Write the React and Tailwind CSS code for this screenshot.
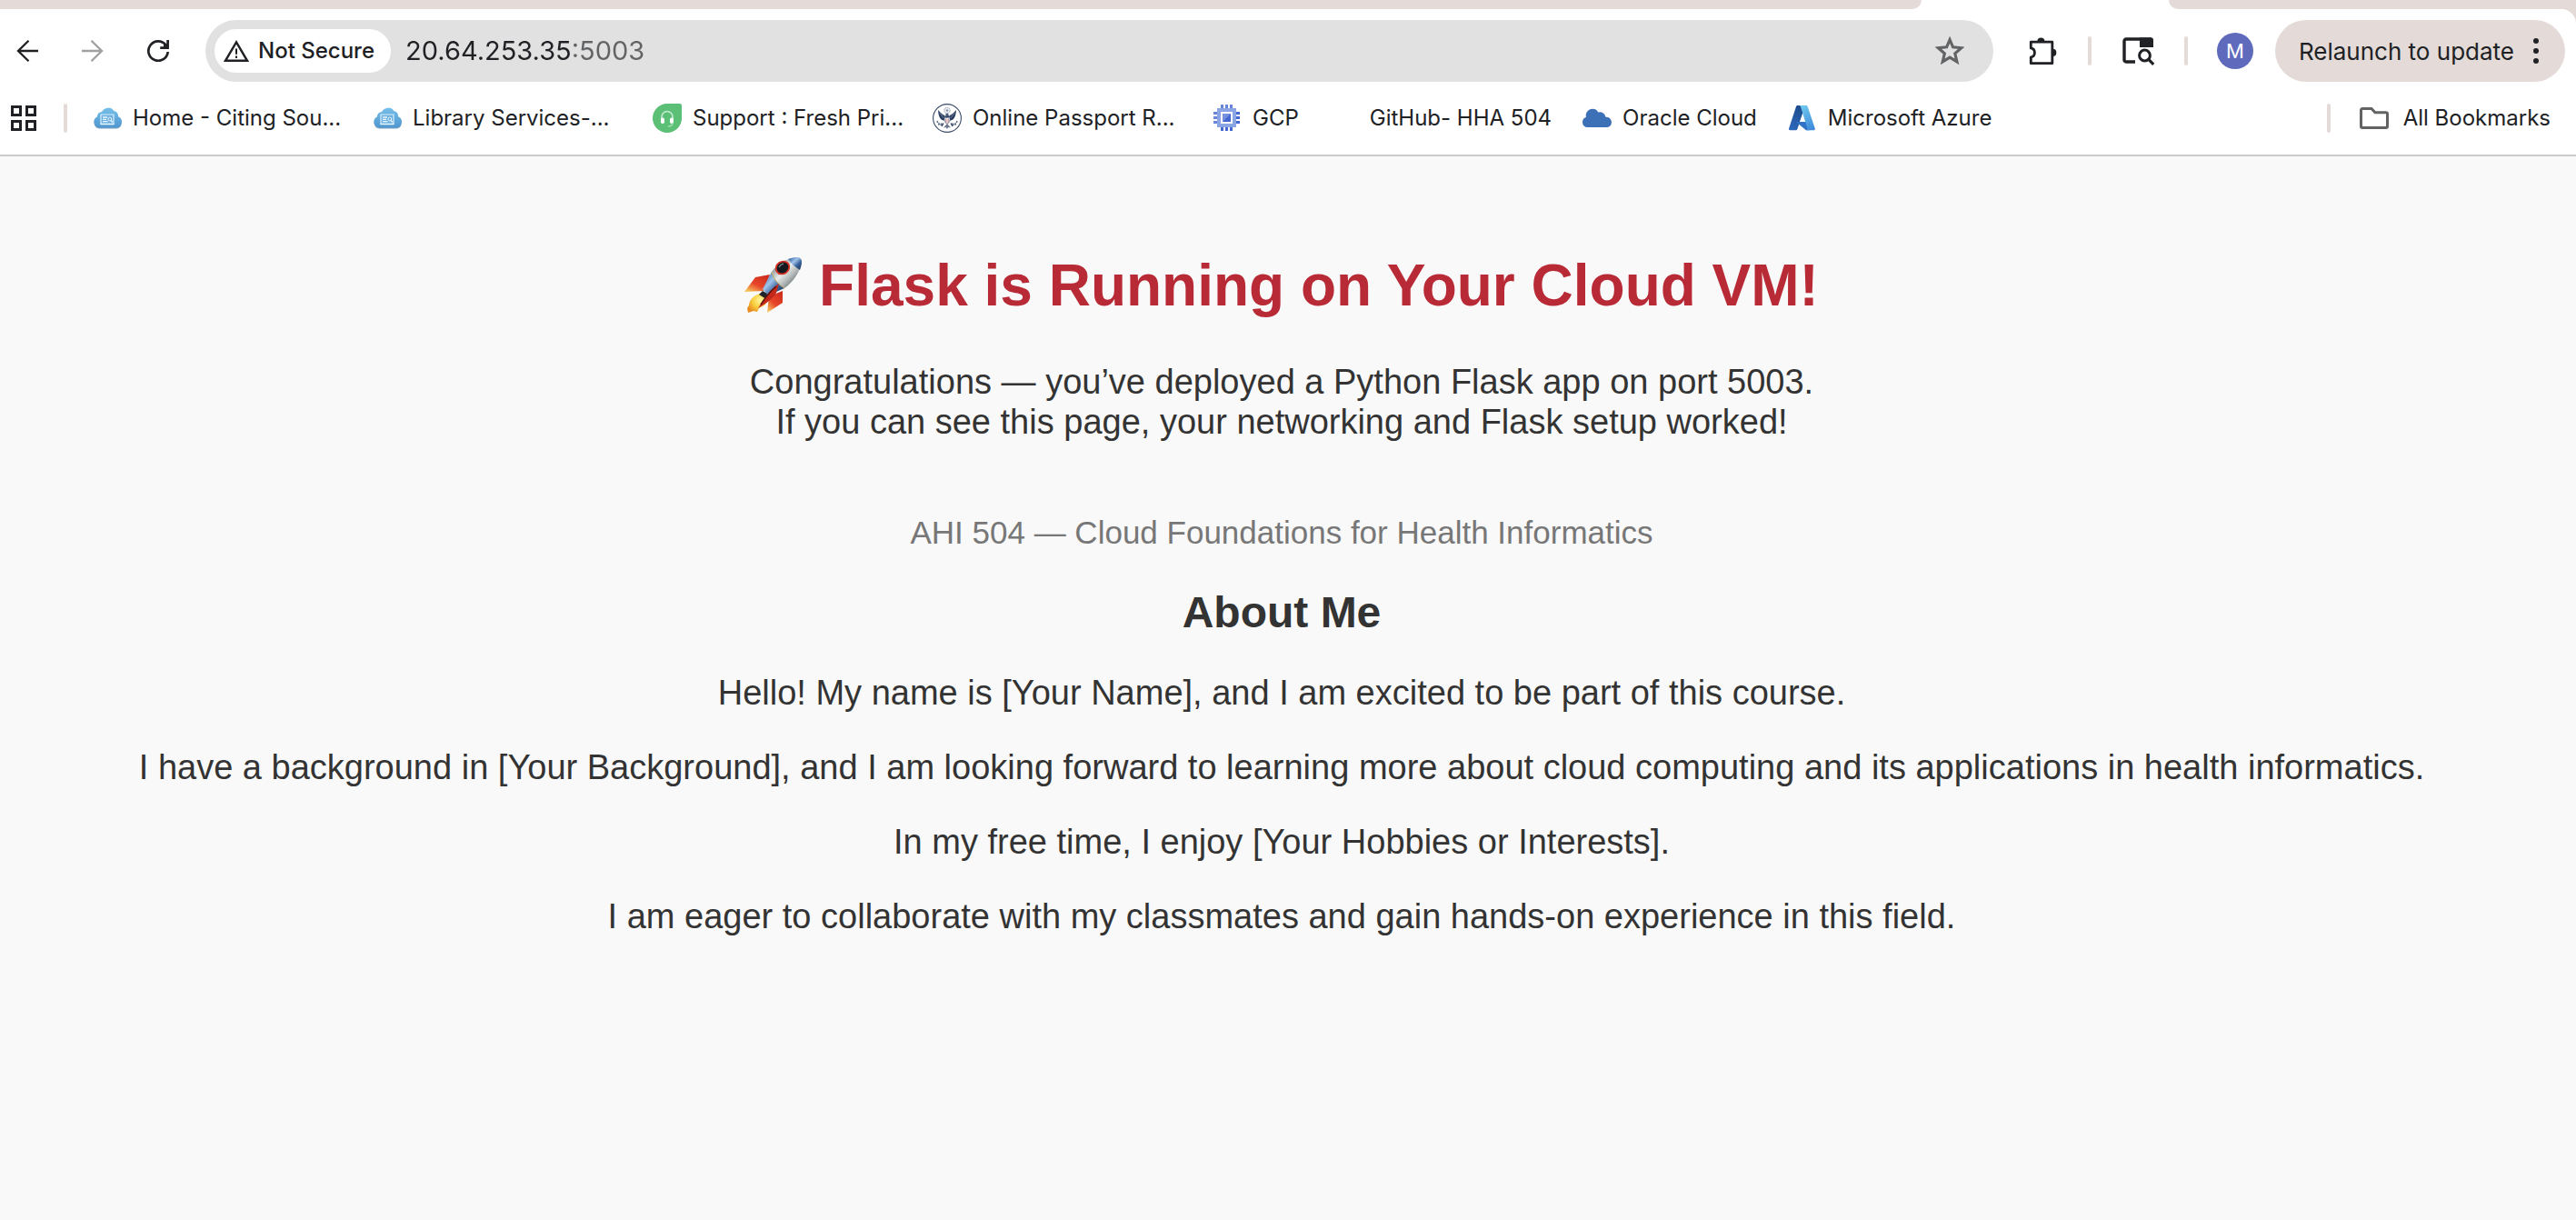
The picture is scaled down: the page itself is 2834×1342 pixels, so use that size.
import React from "react";

const ink = "#202124";

function BackIcon({ className }) {
  return (
    <svg viewBox="0 0 24 24" className={className} fill="none" stroke="currentColor" strokeWidth="2.3" aria-hidden="true">
      <path d="M24 12H2M13.5 .8 2 12l11.5 11.2" />
    </svg>
  );
}

function ReloadIcon() {
  return (
    <svg viewBox="0 0 24 24" className="size-6" aria-hidden="true">
      <path d="M22.7 13A10.7 10.7 0 1 1 20.5 5.5" fill="none" stroke={ink} strokeWidth="2.7" />
      <path d="M22.6 0v8.7H14.2" fill="none" stroke={ink} strokeWidth="2.7" />
      <path d="M18 4.5h5v5h-5z" fill={ink} />
    </svg>
  );
}

function WarningIcon() {
  return (
    <svg viewBox="0 0 28 24" className="h-6 w-7" aria-hidden="true">
      <path d="M14 2.4 26 22.8H2z" fill="none" stroke={ink} strokeWidth="2.4" />
      <path d="M14 9.6v6.2M14 17.6V20" stroke={ink} strokeWidth="2" />
    </svg>
  );
}

function StarIcon() {
  return (
    <svg viewBox="0 0 32 32" className="size-8" aria-hidden="true">
      <path
        d="M16 4.4 19.2 12l8.6.8-6.5 5.6 2 8.5L16 22.400l-7.300 4.500 2-8.500L4.200 12.800l8.600-.8z"
        transform="translate(-1.200 -1.100) scale(1.080)"
        fill="none"
        stroke="#626365"
        strokeWidth="2.900"
      />
    </svg>
  );
}

function PuzzleIcon() {
  return (
    <svg viewBox="0 0 34 34" className="size-8" aria-hidden="true">
      <path
        d="M3.500 6.500h25v25h-25v-7.200a5.400 5.400 0 0 0 0-10.600z"
        fill="none"
        stroke={ink}
        strokeWidth="3"
        strokeLinejoin="round"
      />
      <path d="M11 6a4.300 4.300 0 0 1 8.600 0zM29 14.700a4.300 4.300 0 0 1 0 8.600z" fill={ink} />
    </svg>
  );
}

function TabSearchIcon() {
  return (
    <svg viewBox="0 0 36 32" className="h-8 w-9" aria-hidden="true">
      <path d="M14 28H4a2 2 0 0 1-2-2V5a2 2 0 0 1 2-2h28" fill="none" stroke={ink} strokeWidth="3.400" />
      <path d="M19 1.500h13a2 2 0 0 1 2 2V12H19z" fill={ink} />
      <circle cx="24.500" cy="21" r="5.900" fill="none" stroke={ink} strokeWidth="3" />
      <path d="m28.800 25.400 5.400 5.400" stroke={ink} strokeWidth="3.200" />
    </svg>
  );
}

function AppsIcon() {
  return (
    <svg viewBox="0 0 28 28" className="size-7" fill="none" stroke={ink} strokeWidth="3" aria-hidden="true">
      <path d="M1.500 1.500h9v9h-9zM17.500 1.500h9v9h-9zM1.500 17.500h9v9h-9zM17.500 17.500h9v9h-9z" />
    </svg>
  );
}

function FolderIcon() {
  return (
    <svg viewBox="0 0 32 24" className="h-6 w-8" aria-hidden="true">
      <path
        d="M3 1.500h10l4 4.200h12a1.500 1.500 0 0 1 1.500 1.500V21a1.500 1.500 0 0 1-1.500 1.500H3A1.500 1.500 0 0 1 1.500 21V3A1.500 1.500 0 0 1 3 1.500z"
        fill="none"
        stroke="#626365"
        strokeWidth="3"
      />
    </svg>
  );
}

function LibraryIcon({ id }) {
  return (
    <svg viewBox="0 0 32 32" className="size-8 shrink-0" aria-hidden="true">
      <linearGradient id={id} x1="0" y1="0" x2="0" y2="1">
        <stop offset="0" stopColor="#76bfe9" />
        <stop offset="1" stopColor="#4f97d0" />
      </linearGradient>
      <path d="M7.500 27.500a6.500 6.500 0 0 1-2.400-12.300 5 5 0 0 1 5-5.200 7.600 7.600 0 0 1 13.200-1 5.200 5.200 0 0 1 4.500 6A6.500 6.500 0 0 1 25 27.500z" fill="#4a7ba5" opacity=".7" />
      <path d="M7.500 26.500a6.500 6.500 0 0 1-2.400-12.300 5 5 0 0 1 5-5.200 7.600 7.600 0 0 1 13.200-1 5.200 5.200 0 0 1 4.500 6A6.500 6.500 0 0 1 25 26.500z" fill={`url(#${id})`} />
      <path d="M9 12h14v10.500H9z" fill="#6db0df" stroke="#d9effb" strokeWidth="1.200" />
      <path d="M8.500 22.500h15M11 15h5M11 17.300h4M11 19.600h5.500M20 18.500l2 2" stroke="#e8f6fd" strokeWidth="1.300" />
      <circle cx="18.800" cy="17" r="1.900" fill="none" stroke="#e8f6fd" strokeWidth="1" />
    </svg>
  );
}

function FreshdeskIcon() {
  return (
    <svg viewBox="0 0 32 32" className="size-8 shrink-0" aria-hidden="true">
      <path d="M16 0h14a2 2 0 0 1 2 2v14A16 16 0 1 1 16 0z" fill="#5bbf76" />
      <path d="M10 17v-2.500a6 6 0 0 1 12 0V17" fill="none" stroke="#c5ead0" strokeWidth="1.600" />
      <rect x="9" y="15.500" width="4" height="6.500" rx="1.800" fill="#fff" />
      <rect x="19" y="15.500" width="4" height="6.500" rx="1.800" fill="#fff" />
      <path d="M22 21c0 3-2 4-5 4" fill="none" stroke="#a5dcb4" strokeWidth="1.500" />
    </svg>
  );
}

function SealIcon() {
  return (
    <svg viewBox="0 0 32 32" className="size-8 shrink-0" aria-hidden="true">
      <circle cx="16" cy="16" r="15.400" fill="#fff" stroke="#3a4a68" strokeWidth="1.100" />
      <circle cx="16" cy="7.500" r="3.200" fill="#e9ecf0" stroke="#8d97a8" strokeWidth=".9" strokeDasharray="1.400 .7" />
      <circle cx="16" cy="7.500" r="1.200" fill="#8d97a8" />
      <path d="M13.400 18.500C9 19 6 14 6.200 7c1.800 2.600 4 4.600 7.200 6zM18.600 18.500C23 19 26 14 25.800 7c-1.800 2.600-4 4.600-7.200 6z" fill="#263a5e" />
      <path d="M7.500 10l4.500 6M24.500 10 20 16M9.500 10.500l2.500 3M22.500 10.500l-2.500 3" stroke="#8a97ad" strokeWidth=".7" />
      <path d="M14.500 11.200 16.500 10.500l1.200 1.800v2h-3.400z" fill="#4a5b79" />
      <path d="M13 14h6v4c0 2-1.300 3.400-3 4.200-1.700-.8-3-2.200-3-4.200z" fill="#fff" stroke="#4b5c7c" strokeWidth=".7" />
      <path d="M14.500 16.500V21M16 16.500v5M17.500 16.500V21" stroke="#a85a62" strokeWidth=".6" />
      <path d="M13.300 14.800h5.400" stroke="#263a5e" strokeWidth="1.500" />
      <path d="M5 19c1 3 3 4.500 6.500 4.600M27 19c-1 3-3 4.500-6.500 4.600M6 23l5-1M26 23l-5-1" stroke="#5d6b84" strokeWidth="1.500" fill="none" strokeDasharray="2 .8" />
      <path d="m16 22-4 4.500 2.700-.5L16 28l1.300-2 2.700.5z" fill="#6a778e" />
      <path d="M12 21.500 10 25M20 21.500l2 3.500" stroke="#263a5e" strokeWidth="1.200" />
    </svg>
  );
}

function GcpIcon() {
  return (
    <svg viewBox="0 0 32 32" className="size-8 shrink-0" aria-hidden="true">
      <path d="M9 1h3v5H9zM14 1h3v5h-3zM19 1h3v5h-3zM1 9h5v3H1zM1 14h5v3H1zM1 19h5v3H1z" fill="#6684d8" />
      <path d="M9 25h3v5H9zM14 25h3v5h-3zM19 25h3v5h-3zM25 9h5v3h-5zM25 14h5v3h-5zM25 19h5v3h-5z" fill="#4467d0" />
      <path d="M5 5h21v21H5z" fill="#8ba4e4" />
      <path d="M9 9h13v13H9z" fill="#fff" />
      <path d="M11 11h9v9h-9z" fill="#7590dc" />
      <path d="M20 11v9h-9z" fill="#4467d0" />
    </svg>
  );
}

function OracleIcon() {
  return (
    <svg viewBox="0 0 32 32" className="size-8 shrink-0" aria-hidden="true">
      <path d="M5.500 26A5.500 5.500 0 0 1 0 20.500a6 6 0 0 1 4-5.700A7.200 7.200 0 0 1 17.300 9.500a6.500 6.500 0 0 1 8.200 5.200A5.800 5.800 0 0 1 32 20.500 5.500 5.500 0 0 1 26.500 26z" fill="#3c70b7" />
    </svg>
  );
}

function AzureIcon() {
  return (
    <svg viewBox="0 0 32 32" className="size-8 shrink-0" aria-hidden="true">
      <linearGradient id="azureDark" x1=".6" y1="0" x2=".2" y2="1">
        <stop offset="0" stopColor="#1d4a8b" />
        <stop offset="1" stopColor="#2e69bd" />
      </linearGradient>
      <linearGradient id="azureLight" x1=".3" y1="0" x2=".7" y2="1">
        <stop offset="0" stopColor="#6dc6ee" />
        <stop offset="1" stopColor="#3f8bd9" />
      </linearGradient>
      <path d="M10.500 2H19l-8.600 26a1.800 1.800 0 0 1-1.700 1.300H2.500a1.500 1.500 0 0 1-1.400-2L9 3.200A1.800 1.800 0 0 1 10.500 2z" fill="url(#azureDark)" />
      <path d="M8.700 20H22l2 9.300h-4z" fill="#2f72c6" />
      <path d="M12 2h8a1.800 1.800 0 0 1 1.700 1.200l8 24a1.500 1.500 0 0 1-1.500 2.100H20c1.300-.4 1.700-1.400 1.300-2.500L14 3.500A1.800 1.800 0 0 0 12 2z" fill="url(#azureLight)" />
      <path d="M15.500 13.500 18 20h-4.800z" fill="#fff" />
    </svg>
  );
}

function RocketIcon() {
  return (
    <svg viewBox="0 0 64 64" className="size-16" aria-hidden="true">
      <defs>
        <linearGradient id="hull" x1=".2" y1=".2" x2=".8" y2=".8">
          <stop offset="0" stopColor="#8b9297" />
          <stop offset=".4" stopColor="#e8ebe9" />
          <stop offset=".7" stopColor="#b5bab9" />
          <stop offset="1" stopColor="#6e767c" />
        </linearGradient>
        <linearGradient id="band" x1=".1" y1=".2" x2=".8" y2=".9">
          <stop offset="0" stopColor="#4d79b4" />
          <stop offset=".35" stopColor="#a1c3ea" />
          <stop offset=".7" stopColor="#3c659f" />
          <stop offset="1" stopColor="#26436f" />
        </linearGradient>
        <linearGradient id="fin" x1=".9" y1="0" x2=".2" y2="1">
          <stop offset="0" stopColor="#c92a1c" />
          <stop offset=".6" stopColor="#e8462a" />
          <stop offset="1" stopColor="#f5c25a" />
        </linearGradient>
        <radialGradient id="flame" cx=".65" cy=".35" r=".7">
          <stop offset="0" stopColor="#fff7a0" />
          <stop offset=".55" stopColor="#f8cf3e" />
          <stop offset="1" stopColor="#e88a22" />
        </radialGradient>
      </defs>
      <path d="M28 20 12 23 0 39l21-1z" fill="url(#fin)" />
      <path d="M42 38v13L25 62l2-18z" fill="url(#fin)" />
      <path d="M17 41C9 43 5 49 5 54l-2 3 1 5 6-2 4 1 2-4 6-3c3-3 4-6 3-9z" fill="url(#flame)" />
      <path d="m20 38-4 4 8 5 3-5z" fill="#20242b" />
      <path d="M30 17 20 36l6 7 18-8z" fill="url(#band)" />
      <path d="M58 1c-12 1-22 7-28 16 2 7 7 14 14 18 10-7 17-18 19-29 0-3-2-5-5-5z" fill="url(#hull)" />
      <path d="M63 6c0-3-2-5-5-5-4 0-7 1-10 2 3 5 8 9 13 12 1-3 2-6 2-9z" fill="url(#band)" />
      <path d="M30 17c2 8 7 14 14 18" fill="none" stroke="#cdb257" strokeWidth="1" />
      <ellipse cx="42" cy="12.500" rx="7.600" ry="6.600" transform="rotate(-35 42 12.500)" fill="#15181c" stroke="#d13022" strokeWidth="1.800" />
      <path d="M38 12c1-2 3-3.500 5-4" fill="none" stroke="#707b84" strokeWidth="1.500" />
      <path d="M38 30c-8 5-15 14-23 27 9-5 18-12 20-17z" fill="#c4281a" />
      <path d="M35 33c-6 5-12 12-17 20" fill="none" stroke="#5a130d" strokeWidth="1.500" />
    </svg>
  );
}

function Divider({ className = "" }) {
  return <span className={`h-8 w-1 shrink-0 rounded-full bg-[#e4dbd8] ${className}`} />;
}

const bookmarks = [
  { label: "Home - Citing Sou...", icon: <LibraryIcon id="cloudHome" />, long: true },
  { label: "Library Services-...", icon: <LibraryIcon id="cloudLibrary" />, long: true },
  { label: "Support : Fresh Pri...", icon: <FreshdeskIcon />, long: true },
  { label: "Online Passport R...", icon: <SealIcon />, long: true },
  { label: "GCP", icon: <GcpIcon /> },
  { label: "GitHub- HHA 504", icon: <span className="size-8 shrink-0" /> },
  { label: "Oracle Cloud", icon: <OracleIcon /> },
  { label: "Microsoft Azure", icon: <AzureIcon /> },
];

function TabStrip() {
  return (
    <div className="flex h-[10px] bg-white">
      <div className="flex-1 rounded-br-[20px] bg-[#e4dbd8]" />
      <div className="w-[272px]" />
      <div className="w-[448px] rounded-bl-[20px] bg-[#e4dbd8]" />
    </div>
  );
}

function Toolbar() {
  return (
    <div className="bg-[#e4dbd8]">
      <div className="flex h-[92px] items-center rounded-tr-2xl bg-white pr-3 pl-[18px]">
        <div className="flex items-center gap-12 pr-10">
          <button type="button" aria-label="Back" className="text-[#202124]">
            <BackIcon className="size-6" />
          </button>
          <button type="button" aria-label="Forward" className="text-[#a0a0a1]">
            <BackIcon className="size-6 rotate-180" />
          </button>
          <button type="button" aria-label="Reload">
            <ReloadIcon />
          </button>
        </div>
        <div className="flex h-[68px] flex-1 items-center rounded-full bg-[#e1e1e1] pr-8 pl-[10px]">
          <button type="button" className="flex h-12 shrink-0 items-center gap-2.5 rounded-full bg-white pr-[18px] pl-2.5 text-2xl font-medium">
            <WarningIcon />
            Not Secure
          </button>
          <input
            aria-label="Address"
            defaultValue="20.64.253.35:5003"
            className="ml-4 min-w-0 flex-1 bg-linear-to-r from-[#202124] from-[182px] to-[#626365] to-[182px] bg-clip-text text-[29px] text-transparent outline-none"
          />
          <button type="button" aria-label="Bookmark this tab">
            <StarIcon />
          </button>
        </div>
        <div className="flex items-center pl-[38px]">
          <button type="button" aria-label="Extensions">
            <PuzzleIcon />
          </button>
          <Divider className="mx-[34px]" />
          <button type="button" aria-label="Search tabs">
            <TabSearchIcon />
          </button>
          <Divider className="mx-8" />
          <button type="button" aria-label="Profile" className="flex size-10 items-center justify-center rounded-full bg-[#5f6abc] text-[22px] text-white">
            M
          </button>
          <button type="button" className="ml-6 flex h-[68px] items-center gap-5 rounded-full bg-[#e4dbd8] pr-7 pl-[26px] text-[26px]">
            Relaunch to update
            <svg viewBox="0 0 8 28" className="h-7 w-2" fill={ink} aria-hidden="true">
              <circle cx="4" cy="3" r="3" />
              <circle cx="4" cy="14" r="3" />
              <circle cx="4" cy="25" r="3" />
            </svg>
          </button>
        </div>
      </div>
    </div>
  );
}

function BookmarksBar() {
  return (
    <nav aria-label="Bookmarks" className="flex h-[70px] items-center border-b-2 border-[#cbcbcb] bg-white pr-7 pb-3 pl-3 text-2xl">
      <button type="button" aria-label="Apps">
        <AppsIcon />
      </button>
      <Divider className="mr-7 ml-[30px]" />
      <ul className="flex flex-1 items-center gap-[34px]">
        {bookmarks.map((b) => (
          <li key={b.label}>
            <a href="#" className="flex items-center gap-3 whitespace-nowrap">
              {b.icon}
              <span className={b.long ? "w-[230px]" : ""}>{b.label}</span>
            </a>
          </li>
        ))}
      </ul>
      <Divider className="mr-8" />
      <button type="button" className="flex items-center gap-4">
        <FolderIcon />
        All Bookmarks
      </button>
    </nav>
  );
}

export default function App() {
  return (
    <div className="flex min-h-screen flex-col bg-[#f9f9f9]">
      <header className="font-['Inter',sans-serif] text-[#202124]">
        <TabStrip />
        <Toolbar />
        <BookmarksBar />
      </header>
      <main className="flex-1 pt-[106px] pr-[14px] text-center font-['Liberation_Sans',Arial,sans-serif] text-[38px] leading-[44px] text-[#333]">
        <h1 className="flex items-center justify-center gap-[18px] text-[64px] leading-[72px] font-bold text-[#b82a35]">
          <RocketIcon />
          Flask is Running on Your Cloud VM!
        </h1>
        <p className="mt-12">
          Congratulations — you’ve deployed a Python Flask app on port 5003.
          <br />
          If you can see this page, your networking and Flask setup worked!
        </p>
        <p className="mt-[78px] text-[35px] text-[#777]">AHI 504 — Cloud Foundations for Health Informatics</p>
        <h2 className="mt-[38px] text-5xl leading-[56px] font-bold">About Me</h2>
        <div className="mt-[38px] flex flex-col gap-[38px]">
          <p>Hello! My name is [Your Name], and I am excited to be part of this course.</p>
          <p>I have a background in [Your Background], and I am looking forward to learning more about cloud computing and its applications in health informatics.</p>
          <p>In my free time, I enjoy [Your Hobbies or Interests].</p>
          <p>I am eager to collaborate with my classmates and gain hands-on experience in this field.</p>
        </div>
      </main>
    </div>
  );
}
